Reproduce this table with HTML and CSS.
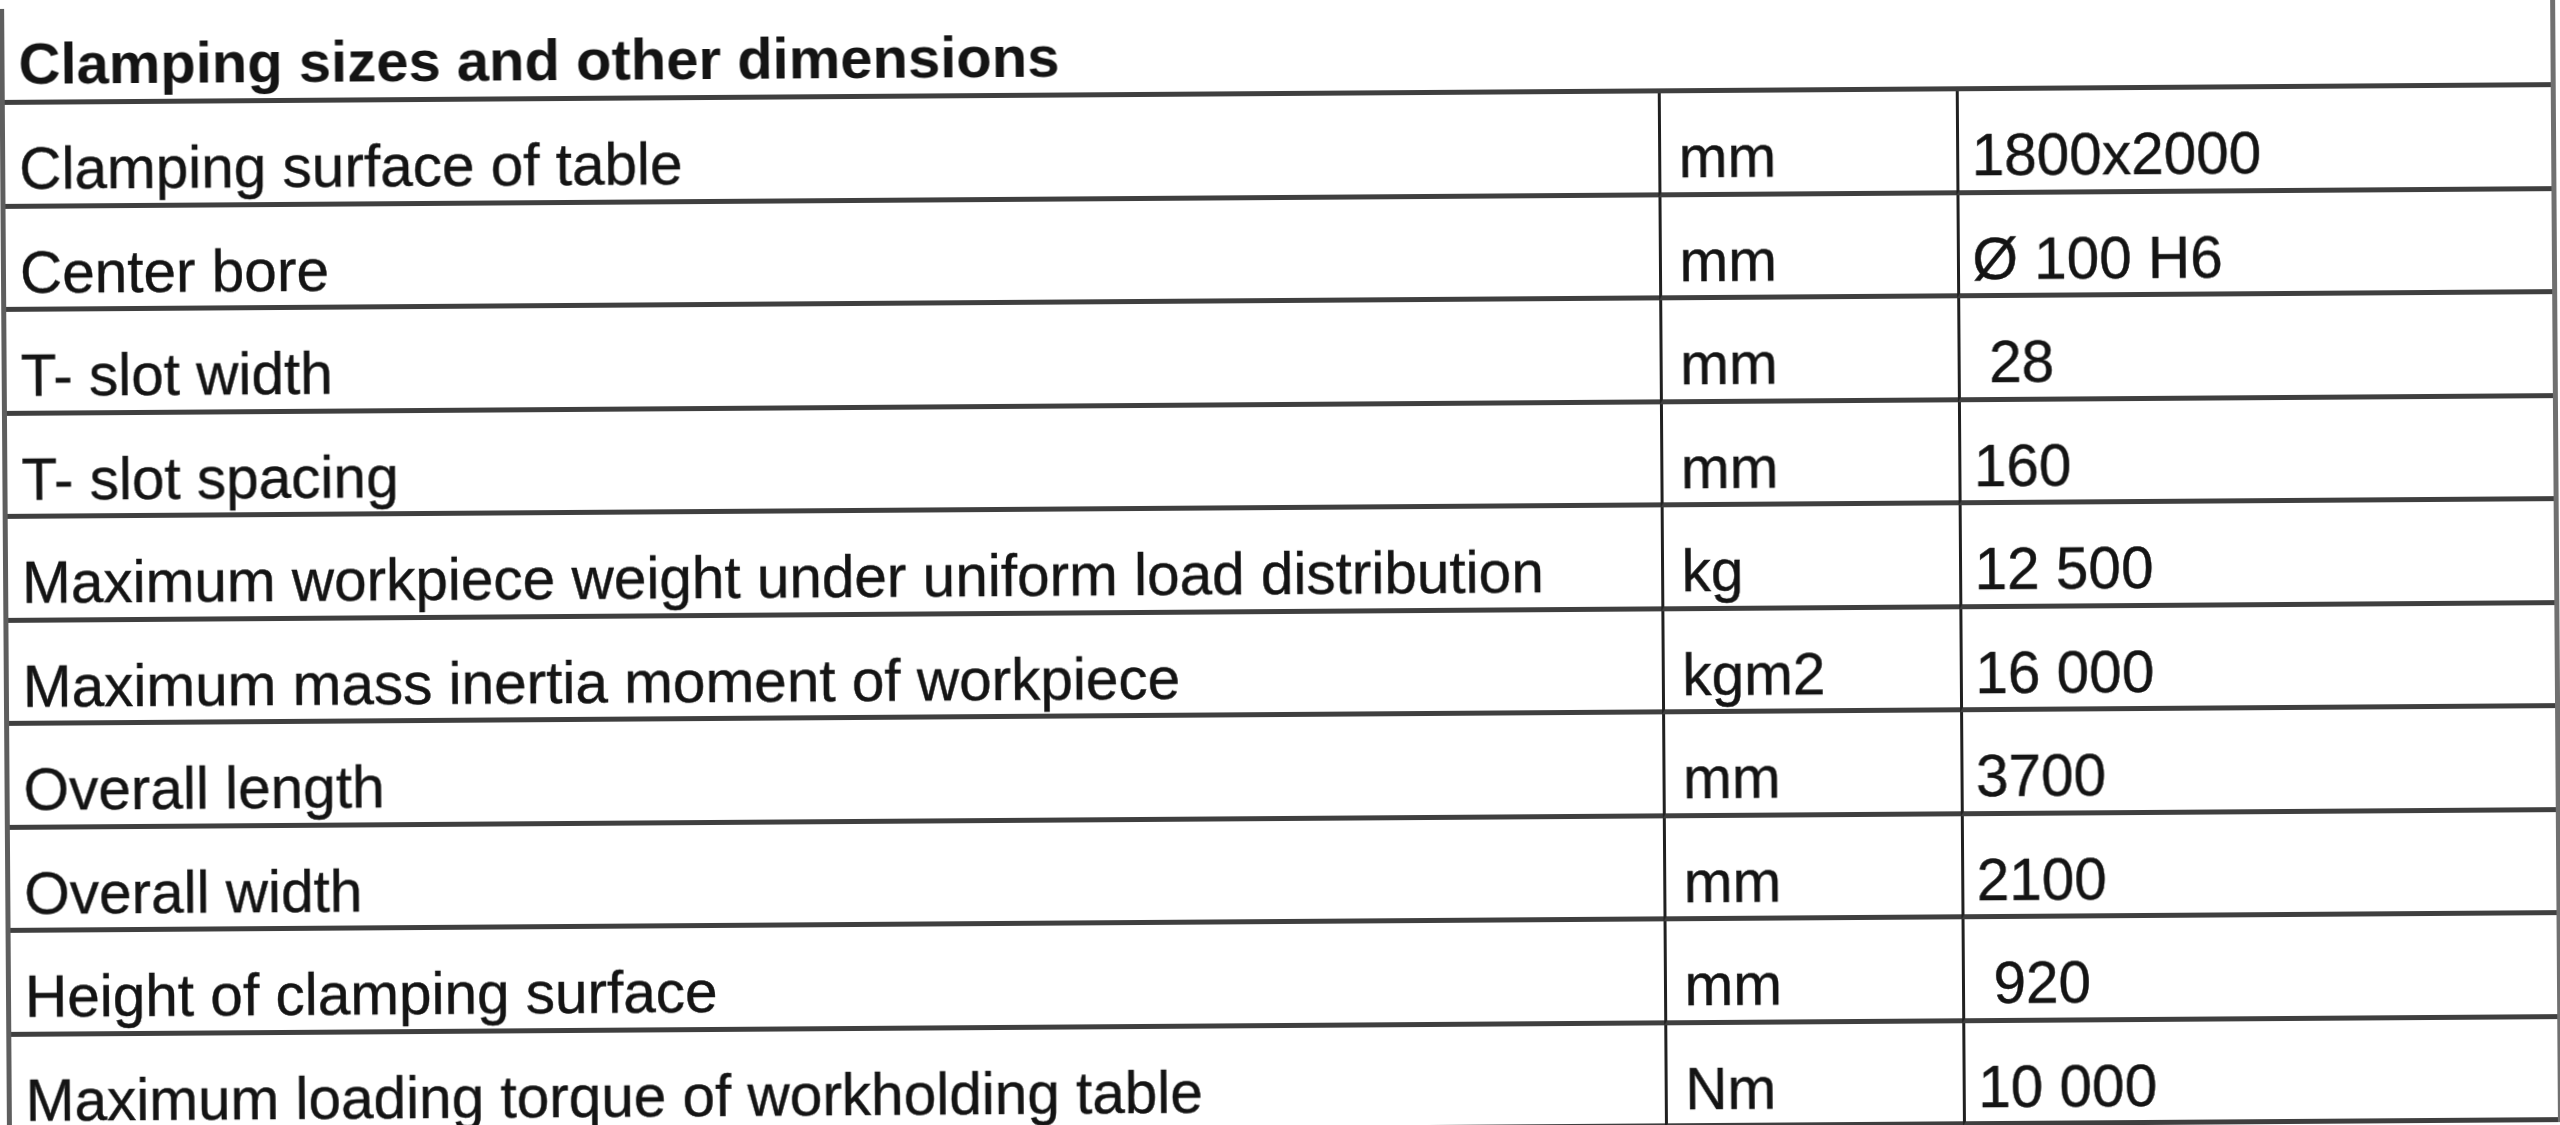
FILE: index.html
```html
<!DOCTYPE html>
<html lang="en">
<head>
<meta charset="utf-8">
<title>Clamping sizes and other dimensions</title>
<link rel="stylesheet" href="styles.css">
</head>
<body>
<div class="sheet">
  <div class="cell head">Clamping sizes and other dimensions</div>

  <div class="cell name">Clamping surface of table</div>
  <div class="cell unit">mm</div>
  <div class="cell val">1800x2000</div>

  <div class="cell name">Center bore</div>
  <div class="cell unit">mm</div>
  <div class="cell val">Ø 100 H6</div>

  <div class="cell name">T- slot width</div>
  <div class="cell unit">mm</div>
  <div class="cell val indent">28</div>

  <div class="cell name">T- slot spacing</div>
  <div class="cell unit">mm</div>
  <div class="cell val">160</div>

  <div class="cell name">Maximum workpiece weight under uniform load distribution</div>
  <div class="cell unit">kg</div>
  <div class="cell val">12 500</div>

  <div class="cell name">Maximum mass inertia moment of workpiece</div>
  <div class="cell unit">kgm2</div>
  <div class="cell val">16 000</div>

  <div class="cell name">Overall length</div>
  <div class="cell unit">mm</div>
  <div class="cell val">3700</div>

  <div class="cell name">Overall width</div>
  <div class="cell unit">mm</div>
  <div class="cell val">2100</div>

  <div class="cell name">Height of clamping surface</div>
  <div class="cell unit">mm</div>
  <div class="cell val indent">920</div>

  <div class="cell name">Maximum loading torque of workholding table</div>
  <div class="cell unit">Nm</div>
  <div class="cell val">10 000</div>
</div>
</body>
</html>
```

FILE: styles.css
```css
html, body {
  margin: 0;
  padding: 0;
  background: #ffffff;
  overflow: hidden;
}

body {
  width: 2560px;
  height: 1125px;
  font-family: "Liberation Sans", Arial, sans-serif;
  color: #141414;
}

.sheet {
  box-sizing: border-box;
  margin-left: 3px;
  width: 2556px;
  display: grid;
  grid-template-columns: 1652.5px 298px 1fr;
  grid-template-rows: 96px repeat(10, 103.5px);
  border-left: 5px solid #5e5e5e;
  border-right: 5px solid #707070;
  transform: rotate(-0.4deg);
  transform-origin: 1280px 560px;
  filter: blur(0.5px);
}

.cell {
  box-sizing: border-box;
  border-bottom: 5px solid #3f3f3f;
  font-size: 58.5px;
  line-height: 58px;
  padding-top: 35px;
  white-space: nowrap;
  overflow: hidden;
  -webkit-text-stroke: 0.4px #141414;
}

.head {
  grid-column: 1 / -1;
  font-weight: bold;
  font-size: 58px;
  padding-top: 26px;
  padding-left: 14px;
  -webkit-text-stroke: 0;
}

.name {
  padding-left: 14px;
}

.unit {
  border-left: 3px solid #202020;
  padding-left: 18px;
}

.val {
  border-left: 3px solid #202020;
  padding-left: 13px;
}

.indent {
  padding-left: 29px;
}
```
